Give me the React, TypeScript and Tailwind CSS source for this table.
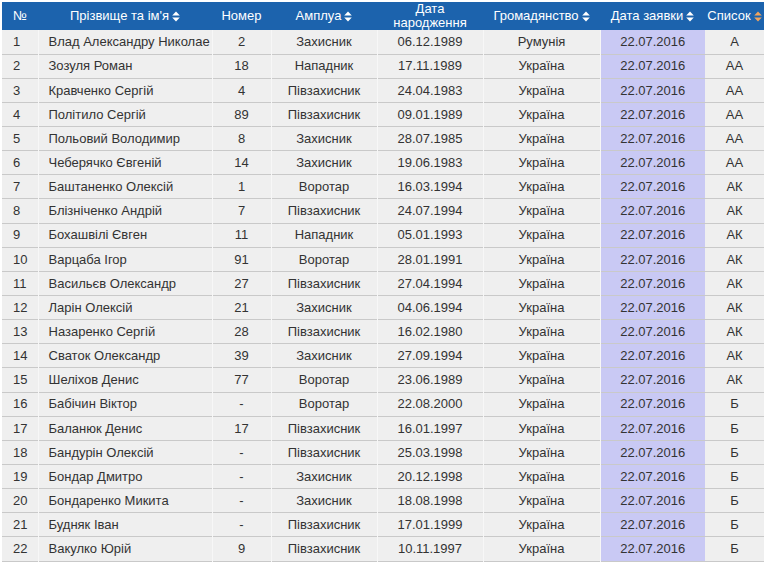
const rows: [string, string, string, string, string, string][] = [
  ["Влад Александру Николае", "2", "Захисник", "06.12.1989", "Румунія", "А"],
  ["Зозуля Роман", "18", "Нападник", "17.11.1989", "Україна", "АА"],
  ["Кравченко Сергій", "4", "Півзахисник", "24.04.1983", "Україна", "АА"],
  ["Політило Сергій", "89", "Півзахисник", "09.01.1989", "Україна", "АА"],
  ["Польовий Володимир", "8", "Захисник", "28.07.1985", "Україна", "АА"],
  ["Чеберячко Євгеній", "14", "Захисник", "19.06.1983", "Україна", "АА"],
  ["Баштаненко Олексій", "1", "Воротар", "16.03.1994", "Україна", "АК"],
  ["Блізніченко Андрій", "7", "Півзахисник", "24.07.1994", "Україна", "АК"],
  ["Бохашвілі Євген", "11", "Нападник", "05.01.1993", "Україна", "АК"],
  ["Варцаба Ігор", "91", "Воротар", "28.01.1991", "Україна", "АК"],
  ["Васильєв Олександр", "27", "Півзахисник", "27.04.1994", "Україна", "АК"],
  ["Ларін Олексій", "21", "Захисник", "04.06.1994", "Україна", "АК"],
  ["Назаренко Сергій", "28", "Півзахисник", "16.02.1980", "Україна", "АК"],
  ["Сваток Олександр", "39", "Захисник", "27.09.1994", "Україна", "АК"],
  ["Шеліхов Денис", "77", "Воротар", "23.06.1989", "Україна", "АК"],
  ["Бабічин Віктор", "-", "Воротар", "22.08.2000", "Україна", "Б"],
  ["Баланюк Денис", "17", "Півзахисник", "16.01.1997", "Україна", "Б"],
  ["Бандурін Олексій", "-", "Півзахисник", "25.03.1998", "Україна", "Б"],
  ["Бондар Дмитро", "-", "Захисник", "20.12.1998", "Україна", "Б"],
  ["Бондаренко Микита", "-", "Захисник", "18.08.1998", "Україна", "Б"],
  ["Будняк Іван", "-", "Півзахисник", "17.01.1999", "Україна", "Б"],
  ["Вакулко Юрій", "9", "Півзахисник", "10.11.1997", "Україна", "Б"],
];

function SortIcon({ active }: { active?: boolean }) {
  return (
    <svg
      width="8"
      height="11"
      viewBox="0 0 8 11"
      className={active ? "ml-[3px] inline-block fill-[#f0a35e]" : "ml-[3px] inline-block fill-white"}
    >
      <path d="M4 0.5 L7.8 4.6 L0.2 4.6 Z" />
      <path d="M0.2 6.4 L7.8 6.4 L4 10.5 Z" />
    </svg>
  );
}

export default function App() {
  return (
    <div className="min-h-screen bg-white pl-[2px] pt-[2px] font-['Liberation_Sans',Arial,sans-serif] text-[13px]">
      <table className="w-[762px] table-fixed border-collapse">
        <colgroup>
          <col className="w-[36px]" />
          <col className="w-[174px]" />
          <col className="w-[59px]" />
          <col className="w-[106px]" />
          <col className="w-[106px]" />
          <col className="w-[117px]" />
          <col className="w-[105px]" />
          <col className="w-[59px]" />
        </colgroup>
        <thead>
          <tr className="h-[28px] bg-[#1c63ad] text-white">
            <th className="pl-[11px] text-left font-normal">№</th>
            <th className="text-center font-normal">
              Прізвище та ім'я
              <SortIcon />
            </th>
            <th className="text-center font-normal">Номер</th>
            <th className="text-center font-normal">
              Амплуа
              <SortIcon />
            </th>
            <th className="text-center font-normal leading-[14px]">
              <div>Дата</div>
              <div>народження</div>
            </th>
            <th className="text-center font-normal">
              Громадянство
              <SortIcon />
            </th>
            <th className="text-center font-normal">
              Дата заявки
              <SortIcon />
            </th>
            <th className="text-center font-normal">
              Список
              <SortIcon active />
            </th>
          </tr>
        </thead>
        <tbody className="text-[#333]">
          {rows.map((r, i) => (
            <tr key={i} className="h-[24.15px] border-b border-[#c9c9c9] bg-[#efefef]">
              <td className="border-r border-[#f7f7f7] pl-[11px]">{i + 1}</td>
              <td className="whitespace-nowrap border-r border-[#f7f7f7] pl-[10px]">{r[0]}</td>
              <td className="border-r border-[#f7f7f7] text-center">{r[1]}</td>
              <td className="border-r border-[#f7f7f7] text-center">{r[2]}</td>
              <td className="border-r border-[#f7f7f7] text-center">{r[3]}</td>
              <td className="border-r border-[#f7f7f7] text-center">{r[4]}</td>
              <td className="bg-[#c9c9f4] text-center">22.07.2016</td>
              <td className="text-center">{r[5]}</td>
            </tr>
          ))}
        </tbody>
      </table>
    </div>
  );
}
